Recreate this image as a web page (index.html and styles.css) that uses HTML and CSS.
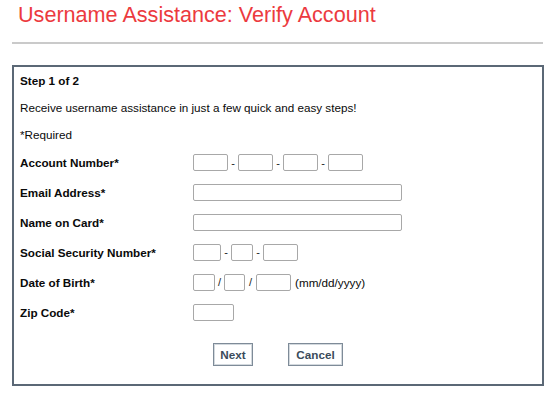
FILE: index.html
```html
<!DOCTYPE html>
<html>
<head>
<meta charset="utf-8">
<link rel="stylesheet" href="styles.css">
</head>
<body>
<div class="page">
  <h1 class="title">Username Assistance: Verify Account</h1>
  <div class="rule"></div>
  <form class="box">
    <div class="line strong">Step 1 of 2</div>
    <div class="line">Receive username assistance in just a few quick and easy steps!</div>
    <div class="line">*Required</div>

    <div class="row first">
      <label class="label">Account Number*</label>
      <div class="fields">
        <input class="in w35" type="text"><span class="sep">-</span>
        <input class="in w35" type="text"><span class="sep">-</span>
        <input class="in w35" type="text"><span class="sep">-</span>
        <input class="in w35" type="text">
      </div>
    </div>
    <div class="row">
      <label class="label">Email Address*</label>
      <div class="fields"><input class="in w209" type="text"></div>
    </div>
    <div class="row">
      <label class="label">Name on Card*</label>
      <div class="fields"><input class="in w209" type="text"></div>
    </div>
    <div class="row">
      <label class="label">Social Security Number*</label>
      <div class="fields">
        <input class="in w28" type="text"><span class="sep">-</span>
        <input class="in w22" type="text"><span class="sep">-</span>
        <input class="in w35" type="text">
      </div>
    </div>
    <div class="row">
      <label class="label">Date of Birth*</label>
      <div class="fields">
        <input class="in w22" type="text"><span class="sep slash">/</span>
        <input class="in w21" type="text"><span class="sep slash2">/</span>
        <input class="in w35" type="text"><span class="hint">(mm/dd/yyyy)</span>
      </div>
    </div>
    <div class="row">
      <label class="label">Zip Code*</label>
      <div class="fields"><input class="in w41" type="text"></div>
    </div>

    <div class="actions">
      <button type="button" class="btn next">Next</button>
      <button type="button" class="btn cancel">Cancel</button>
    </div>
  </form>
</div>
</body>
</html>
```
FILE: styles.css
```css
* { box-sizing: border-box; }
html, body { margin: 0; padding: 0; background: #fff; }
body {
  font-family: "Liberation Sans", Arial, sans-serif;
  color: #0a0a0a;
  font-size: 11.7px;
}
.page {
  width: 532px;
  margin-left: 12px;
}
.title {
  margin: 3px 0 0 0;
  padding-left: 6px;
  font-size: 21.6px;
  line-height: 24px;
  font-weight: normal;
  color: #ec3a3e;
}
.rule {
  margin-top: 15px;
  height: 2px;
  width: 531px;
  background: #cacaca;
}
.box {
  margin: 21px 0 0 0;
  border: 2px solid #5b6876;
  padding: 0 6px 17px 6px;
  height: 321px;
}
.line {
  height: 27px;
  line-height: 27px;
}
.strong { font-weight: bold; }
.row {
  display: flex;
  align-items: center;
  height: 30px;
}
.row.first { height: 29px; }
.label {
  width: 173px;
  font-weight: bold;
  flex: none;
}
.fields {
  display: flex;
  align-items: center;
}
.in {
  height: 17px;
  border: 1px solid #a8a8a8;
  border-radius: 2px;
  background: #fff;
  padding: 0;
  margin: 0;
  font: inherit;
}
.w21 { width: 21px; }
.w22 { width: 22px; }
.w28 { width: 28px; }
.w35 { width: 35px; }
.w41 { width: 41px; }
.w209 { width: 209px; }
.sep {
  width: 10px;
  text-align: center;
  font-size: 11px;
  color: #222;
}
.slash { width: 9px; }
.slash2 { width: 11px; }
.hint {
  margin-left: 4px;
}
.actions {
  display: flex;
  justify-content: center;
  gap: 35px;
  margin-top: 16px;
}
.btn {
  height: 23px;
  padding: 0;
  background: #fff;
  border: 1px solid #7e8b98;
  box-shadow: inset 0 0 0 1px #d3d9de;
  font-family: "Liberation Sans", Arial, sans-serif;
  font-weight: bold;
  font-size: 11.7px;
  color: #3b4b5b;
}
.next { width: 40px; }
.cancel { width: 55px; }
```
